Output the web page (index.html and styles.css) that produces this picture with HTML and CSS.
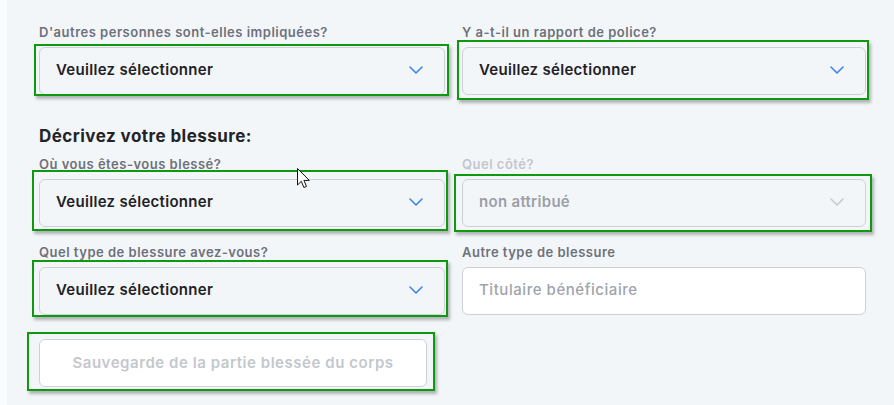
FILE: index.html
```html
<!DOCTYPE html>
<html lang="fr">
<head>
<meta charset="utf-8">
<title>Blessure</title>
<link rel="stylesheet" href="styles.css">
</head>
<body>
<div class="page">
  <div class="strip"></div>
  <main class="form">
    <div class="row">
      <div class="field">
        <label class="label">D'autres personnes sont-elles impliquées?</label>
        <div class="control select">
          <span class="value">Veuillez sélectionner</span>
          <svg class="chev" width="14" height="8" viewBox="0 0 14 8"><path d="M1 1l6 6 6-6" fill="none" stroke="currentColor" stroke-width="1.6" stroke-linecap="round" stroke-linejoin="round"/></svg>
          <div class="hl hl-1"></div>
        </div>
      </div>
      <div class="field">
        <label class="label">Y a-t-il un rapport de police?</label>
        <div class="control select">
          <span class="value">Veuillez sélectionner</span>
          <svg class="chev" width="14" height="8" viewBox="0 0 14 8"><path d="M1 1l6 6 6-6" fill="none" stroke="currentColor" stroke-width="1.6" stroke-linecap="round" stroke-linejoin="round"/></svg>
          <div class="hl hl-2"></div>
        </div>
      </div>
    </div>

    <h2 class="heading">Décrivez votre blessure:</h2>

    <div class="row row-tight">
      <div class="field">
        <label class="label">Où vous êtes-vous blessé?</label>
        <div class="control select">
          <span class="value">Veuillez sélectionner</span>
          <svg class="chev" width="14" height="8" viewBox="0 0 14 8"><path d="M1 1l6 6 6-6" fill="none" stroke="currentColor" stroke-width="1.6" stroke-linecap="round" stroke-linejoin="round"/></svg>
          <div class="hl hl-3"></div>
        </div>
      </div>
      <div class="field">
        <label class="label label-disabled">Quel côté?</label>
        <div class="control select disabled">
          <span class="value">non attribué</span>
          <svg class="chev" width="14" height="8" viewBox="0 0 14 8"><path d="M1 1l6 6 6-6" fill="none" stroke="currentColor" stroke-width="1.4" stroke-linecap="round" stroke-linejoin="round"/></svg>
          <div class="hl hl-4"></div>
        </div>
      </div>
    </div>

    <div class="row row-mid">
      <div class="field">
        <label class="label">Quel type de blessure avez-vous?</label>
        <div class="control select">
          <span class="value">Veuillez sélectionner</span>
          <svg class="chev" width="14" height="8" viewBox="0 0 14 8"><path d="M1 1l6 6 6-6" fill="none" stroke="currentColor" stroke-width="1.6" stroke-linecap="round" stroke-linejoin="round"/></svg>
          <div class="hl hl-5"></div>
        </div>
      </div>
      <div class="field">
        <label class="label">Autre type de blessure</label>
        <div class="control input">
          <span class="placeholder">Titulaire bénéficiaire</span>
        </div>
      </div>
    </div>

    <div class="actions">
      <div class="control button">
        <span>Sauvegarde de la partie blessée du corps</span>
        <div class="hl hl-6"></div>
      </div>
    </div>
  </main>

  <svg class="cursor" width="13" height="21" viewBox="0 0 13 21"><path d="M0.5 0.5v16.5l3.8-3.7 2.6 6.2 2.6-1.1-2.6-6h5.4z" fill="#fff" stroke="#111" stroke-width="1" stroke-linejoin="round"/></svg>
</div>
</body>
</html>
```

FILE: styles.css
```css
* { box-sizing: border-box; }

html, body {
  margin: 0;
  padding: 0;
  background: #f3f6f9;
  font-family: Inter, "Noto Sans", "Liberation Sans", sans-serif;
}

.page {
  position: relative;
  display: flex;
  width: 894px;
  height: 405px;
  overflow: hidden;
}

.strip {
  width: 7px;
  flex: none;
  background: #fafbfd;
}

.form {
  flex: 1;
  display: flex;
  flex-direction: column;
  padding: 24px 28px 0 32px;
}

.row {
  display: grid;
  grid-template-columns: 406px 404px;
  column-gap: 17px;
}

.row-tight { margin-top: 9px; }
.row-mid { margin-top: 17px; }

.field {
  display: flex;
  flex-direction: column;
}

.label {
  display: block;
  font-size: 13px;
  line-height: 16px;
  font-weight: 600;
  color: #6d717a;
  margin-bottom: 7px;
  letter-spacing: 0.5px;
}

.label-disabled { color: #c3c6cc; }

.heading {
  margin: 30px 0 0;
  font-size: 17px;
  line-height: 22px;
  font-weight: 700;
  color: #222428;
  letter-spacing: 0.45px;
}

.control {
  position: relative;
  height: 48px;
  border: 1px solid #cdd1d6;
  border-radius: 6px;
  display: flex;
  align-items: center;
  padding: 0 21px 0 16px;
}

.select {
  background: #f3f6f9;
  justify-content: space-between;
}

.value {
  font-size: 15px;
  line-height: 18px;
  margin-top: -2px;
  font-weight: 600;
  color: #1f2125;
  letter-spacing: 0.3px;
}

.chev { color: #3d86f0; flex: none; margin-top: -2px; }

.disabled .value { color: #9c9fa7; }
.disabled .chev { color: #c2c5cb; }

.input { background: #ffffff; }

.placeholder {
  font-size: 15px;
  line-height: 18px;
  margin-top: -2px;
  font-weight: 500;
  color: #a0a3ab;
  letter-spacing: 0.55px;
}

.actions { margin-top: 24px; }

.button {
  width: 388px;
  background: #ffffff;
  justify-content: center;
  padding: 0;
  font-size: 15px;
  line-height: 18px;
  font-weight: 600;
  color: #c4c7cc;
  letter-spacing: 0.55px;
}

/* green annotation frames over the controls */
.hl {
  position: absolute;
  border: 2px solid #0e990e;
  box-shadow: 2px 3px 3px rgba(0, 0, 0, 0.28);
  pointer-events: none;
}
.hl-1 { left: -6px; top: -4px; right: -5px; bottom: -2px; }
.hl-2 { left: -6px; top: -8px; right: -4px; bottom: -6px; }
.hl-3 { left: -8px; top: -10px; right: -4px; bottom: -5px; }
.hl-4 { left: -9px; top: -6px; right: -7px; bottom: -6px; }
.hl-5 { left: -8px; top: -8px; right: -4px; bottom: -3px; }
.hl-6 { left: -13px; top: -8px; right: -9px; bottom: -5px; }

.cursor {
  position: absolute;
  left: 297px;
  top: 168px;
}
```
